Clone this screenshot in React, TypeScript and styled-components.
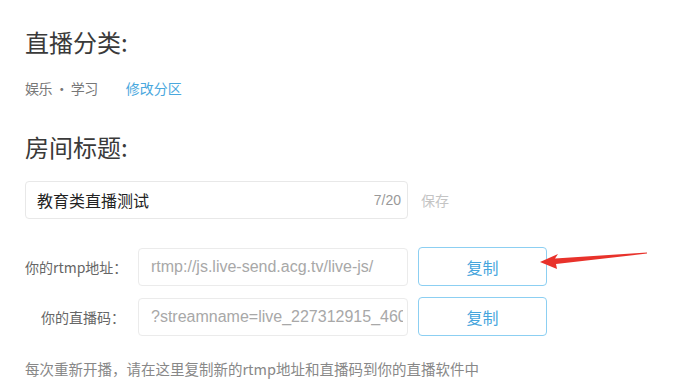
import React from 'react'
import styled, { createGlobalStyle } from 'styled-components'

const Global = createGlobalStyle`
body {
  margin: 0;
  background: #fff;
  font-family: "Liberation Sans", "Noto Sans CJK SC", sans-serif;
}
`

const App = () => {
  return (
    <div>
      <Global />
      <Page>
        <Title>直播分类:</Title>
        <CategoryRow>
          <Muted>娱乐 · 学习</Muted>
          <Link>修改分区</Link>
        </CategoryRow>

        <Title $gap={33}>房间标题:</Title>
        <TitleRow>
          <TitleBox>
            <TitleText>教育类直播测试</TitleText>
            <Counter>7/20</Counter>
          </TitleBox>
          <Save>保存</Save>
        </TitleRow>

        <Form>
          <Row>
            <Label>你的rtmp地址：</Label>
            <Field readOnly value="rtmp://js.live-send.acg.tv/live-js/" />
            <CopyButton>复制</CopyButton>
            <Arrow width="114" height="24" viewBox="0 0 114 24">
              <polygon points="4,14 22,6 19,10.5 111,4.5 111,5.6 20,16 21,21" fill="#e8322b" />
            </Arrow>
          </Row>
          <Row>
            <Label>你的直播码：</Label>
            <Field readOnly value="?streamname=live_227312915_4608361&key=" />
            <CopyButton>复制</CopyButton>
          </Row>
        </Form>

        <Hint>每次重新开播，请在这里复制新的rtmp地址和直播码到你的直播软件中</Hint>
      </Page>
    </div>
  )
}

export default App

const Page = styled.div`
padding: 26px 0 0 25px;
width: 682px;
height: 382px;
box-sizing: border-box;
overflow: hidden;
`

const Title = styled.div<{ $gap?: number }>`
margin-top: ${p => p.$gap || 0}px;
font-size: 24px;
line-height: 32px;
color: #3a3a3a;
font-family: "Noto Sans CJK SC", sans-serif;
`

const CategoryRow = styled.div`
margin-top: 20px;
display: flex;
align-items: center;
gap: 28px;
font-size: 14px;
line-height: 20px;
font-family: "Noto Sans CJK SC", sans-serif;
`

const Muted = styled.span`
color: #777;
letter-spacing: -0.5px;
`

const Link = styled.span`
color: #4aa8de;
`

const TitleRow = styled.div`
margin-top: 18px;
display: flex;
align-items: center;
gap: 13px;
`

const TitleBox = styled.div`
width: 383px;
height: 38px;
box-sizing: border-box;
border: 1px solid #e8e8e8;
border-radius: 4px;
display: flex;
align-items: center;
justify-content: space-between;
padding: 0 6px 0 11px;
`

const TitleText = styled.span`
font-size: 16px;
color: #222;
font-weight: 400;
font-family: "Noto Sans CJK SC", sans-serif;
`

const Counter = styled.span`
font-size: 14px;
color: #999;
`

const Save = styled.span`
font-size: 14px;
color: #c4c4c4;
font-family: "Noto Sans CJK SC", sans-serif;
`

const Form = styled.div`
margin-top: 28px;
display: flex;
flex-direction: column;
gap: 11px;
`

const Row = styled.div`
position: relative;
display: flex;
align-items: center;
`

const Label = styled.div`
width: 100px;
white-space: nowrap;
text-align: right;
font-size: 14px;
color: #666;
font-family: "Noto Sans CJK SC", sans-serif;
margin-right: 13px;
`

const Field = styled.input`
width: 270px;
height: 38px;
box-sizing: border-box;
border: 1px solid #ebebeb;
border-radius: 4px;
padding: 0 4px 0 12px;
margin: 0;
outline: none;
background: #fff;
font-family: "Liberation Sans", sans-serif;
font-size: 16px;
color: #a8a8a8;
`

const CopyButton = styled.div`
margin-left: 10px;
width: 129px;
height: 39px;
box-sizing: border-box;
border: 1.5px solid #8ccff2;
border-radius: 4px;
display: flex;
align-items: center;
justify-content: center;
font-size: 16px;
color: #45a5dd;
font-family: "Noto Sans CJK SC", sans-serif;
`

const Arrow = styled.svg`
position: absolute;
left: 511px;
top: 1px;
`

const Hint = styled.div`
margin-top: 23px;
font-size: 14.5px;
line-height: 20px;
color: #888;
font-family: "Noto Sans CJK SC", sans-serif;
`
